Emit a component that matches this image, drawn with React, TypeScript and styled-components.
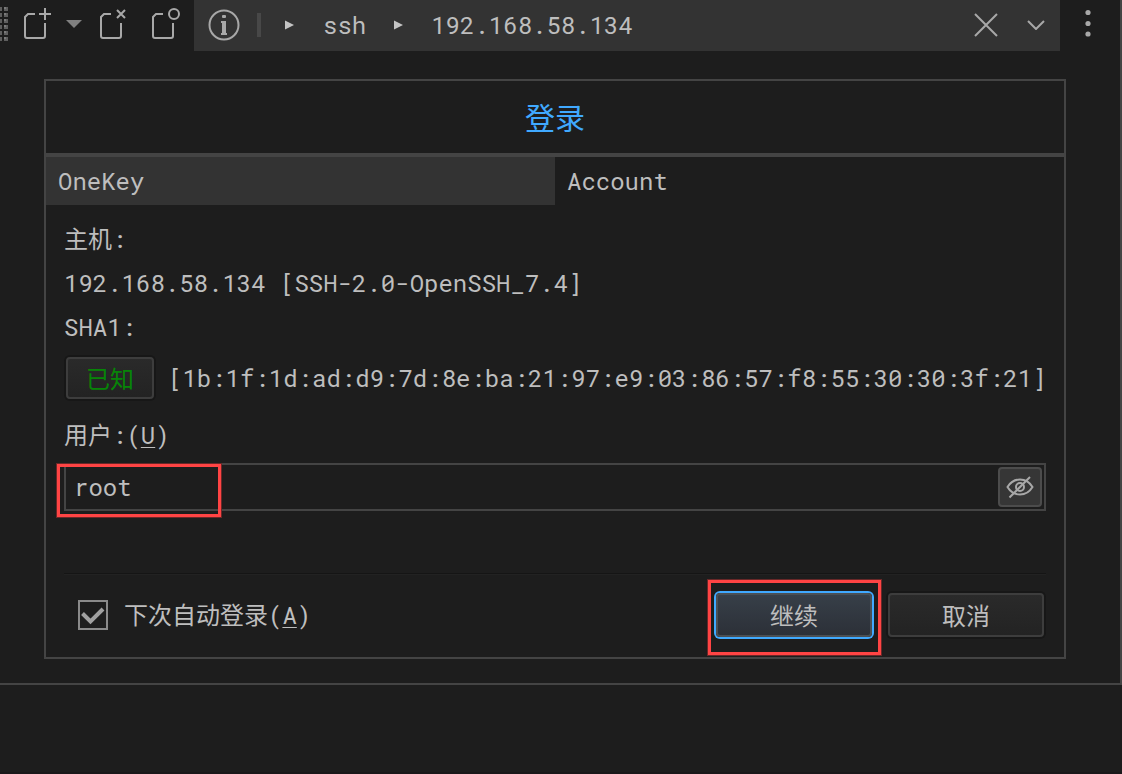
import React from "react";
import styled, { createGlobalStyle, css } from "styled-components";

const Global = createGlobalStyle`
  * { box-sizing: border-box; }
  body {
    margin: 0;
    background: #1d1d1d;
    color: #bebebe;
  }
  body, button, input {
    font-family: "Roboto Mono", "Liberation Mono", "Noto Sans CJK SC", monospace;
    font-size: 24px;
    font-weight: 400;
  }
`;

const Page = styled.div`
  min-height: 100vh;
  background: #1d1d1d;
  border-bottom: 2px solid #1a181a;
`;

const Window = styled.main`
  border: solid #444;
  border-width: 0 2px 2px 0;
`;

const Toolbar = styled.header`
  display: flex;
  align-items: stretch;
  height: 51px;
`;

const Tools = styled.div`
  flex: 0 0 194px;
  display: flex;
`;

const ToolGroup = styled.div`
  display: flex;
  gap: 20px;
  margin-left: 2px;
`;

const plain = css`
  border: 0;
  padding: 0;
  background: none;
  color: #a8a8a8;
  display: flex;
  align-items: center;
  justify-content: center;
`;

const ToolButton = styled.button<{ $width: number }>`
  ${plain}
  flex: 0 0 ${(p) => p.$width}px;
  svg { display: block; }
`;

const Grip = styled.svg`
  display: block;
  flex: none;
`;

const AddressBar = styled.nav`
  flex: 1;
  min-width: 0;
  display: flex;
  align-items: center;
  padding-bottom: 1px;
  background: #333;
`;

const Divider = styled.span`
  width: 4px;
  height: 24px;
  margin-left: 3px;
  background: #484848;
`;

const Crumb = styled.a`
  color: inherit;
  text-decoration: none;
  white-space: nowrap;
  line-height: 48px;
`;

const CrumbArrow = styled.svg<{ $before: number; $after: number }>`
  flex: none;
  margin: 0 ${(p) => p.$after}px 0 ${(p) => p.$before}px;
`;

const Spacer = styled.span`
  flex: 1;
`;

const MenuButton = styled.button`
  ${plain}
  flex: 0 0 60px;
  padding-right: 4px;
`;

const Dialog = styled.form`
  margin: 28px 54px 24px 44px;
  border: 2px solid #444;
`;

const Title = styled.h1`
  margin: 0;
  height: 72px;
  font-size: 30px;
  font-weight: 400;
  line-height: 74px;
  text-align: center;
  color: #40a9ff;
`;

const Tabs = styled.div`
  display: grid;
  grid-template-columns: 1fr 1fr;
  border-top: 4px solid #444;
`;

const Tab = styled.button<{ $raised?: boolean }>`
  border: 0;
  height: 48px;
  padding: 0 12px;
  text-align: left;
  color: inherit;
  background: ${(p) => (p.$raised ? "#333" : "transparent")};
`;

const Body = styled.div`
  padding: 12px 18px 18px;
`;

const Line = styled.div`
  line-height: 44px;
`;

const HashRow = styled.div`
  display: flex;
  align-items: center;
  gap: 14px;
  height: 58px;
  white-space: nowrap;
`;

const FieldLabel = styled.label`
  display: block;
  line-height: 56px;
`;

const Key = styled.span`
  text-decoration: underline;
  text-decoration-thickness: 1px;
  text-underline-offset: 3px;
`;

const PushButton = styled.button<{ $width: number; $primary?: boolean; $tone?: string }>`
  flex: none;
  width: ${(p) => p.$width}px;
  height: 44px;
  padding: 0 0 2px;
  border: 2px solid #3d3d3d;
  border-radius: 4px;
  box-shadow: 0 0 0 2px #171717;
  background: linear-gradient(#2a2a2a, #232323);
  color: ${(p) => p.$tone ?? "inherit"};
  ${(p) =>
    p.$primary &&
    css`
      border-color: #4a4f54;
      box-shadow: 0 0 0 2px #40a9ff;
      background: linear-gradient(#373f48, #2c3038);
    `}
`;

const KnownButton = styled(PushButton)`
  height: 42px;
  margin-left: 2px;
`;

const Field = styled.div`
  position: relative;
  display: flex;
  align-items: center;
  height: 48px;
  padding-right: 2px;
  border: 2px solid #444;
`;

const TextInput = styled.input`
  flex: 1;
  min-width: 0;
  height: 44px;
  padding: 0 8px;
  border: 0;
  outline: 0;
  background: transparent;
  color: inherit;
`;

const EyeButton = styled.button`
  ${plain}
  width: 44px;
  height: 40px;
  border: 2px solid #4c4c4c;
  border-radius: 4px;
  background: #363636;
`;

const Rule = styled.hr`
  margin: 62px 0 0;
  border: 0;
  border-top: 1px solid #151515;
  border-bottom: 1px solid #222;
`;

const Footer = styled.div`
  display: flex;
  align-items: center;
  justify-content: space-between;
  padding: 16px 2px 0 0;
`;

const CheckLabel = styled.label`
  display: flex;
  align-items: center;
  gap: 16px;
  padding-left: 14px;
  line-height: 44px;
`;

const CheckBox = styled.span`
  display: grid;
  width: 30px;
  height: 30px;
  > * { grid-area: 1 / 1; }
  svg { pointer-events: none; visibility: hidden; }
  input:checked + svg { visibility: visible; }
`;

const CheckInput = styled.input`
  appearance: none;
  width: 30px;
  height: 30px;
  margin: 0;
  border: 2px solid #8a8a8a;
`;

const Actions = styled.div`
  display: flex;
  align-items: center;
  gap: 16px;
  height: 48px;
`;

const Marked = styled.div`
  position: relative;
  display: flex;
`;

const Highlight = styled.span<{ $inset: string; $width?: number }>`
  position: absolute;
  inset: ${(p) => p.$inset};
  ${(p) => p.$width && `width: ${p.$width}px;`}
  border: 3px solid #ff4444;
  box-shadow: 0 0 0 1px #6a2828;
  pointer-events: none;
`;

const Sheet = ({ children }: { children: React.ReactNode }) => (
  <svg width="32" height="51" viewBox="0 0 32 51" fill="none" stroke="currentColor" strokeWidth="2">
    <path d="M14 14H7L4 17V36Q4 38 6 38H22Q24 38 24 36V23" />
    {children}
  </svg>
);

const Arrow = ({ before, after }: { before: number; after: number }) => (
  <CrumbArrow $before={before} $after={after} width="9" height="10" viewBox="0 0 9 10" aria-hidden="true">
    <path d="M0 0.5V9.5L9 5Z" fill="#c4c4c4" />
  </CrumbArrow>
);

const gripRows = [7, 13, 19, 25, 31, 37];

export default function App() {
  return (
    <>
      <Global />
      <Page>
        <Window>
          <Toolbar>
            <Tools>
              <Grip width="21" height="51" aria-hidden="true">
                {gripRows.map((y) => (
                  <g key={y} fill="#5e5e5e">
                    <rect x="0" y={y} width="2" height="4" />
                    <rect x="4" y={y} width="4" height="4" />
                    <rect x="4" y={y} width="2" height="2" fill="#7a7a7a" />
                  </g>
                ))}
              </Grip>
              <ToolButton type="button" $width={32} aria-label="New session">
                <Sheet><path d="M24 8V20M18 14H30" /></Sheet>
              </ToolButton>
              <ToolButton type="button" $width={42} aria-label="Session list">
                <svg width="16" height="51" viewBox="0 0 16 51"><path d="M0 20H16L8 28Z" fill="#808080" /></svg>
              </ToolButton>
              <ToolGroup>
                <ToolButton type="button" $width={32} aria-label="Close session">
                  <Sheet><path d="M20 10L28 18M28 10L20 18" /></Sheet>
                </ToolButton>
                <ToolButton type="button" $width={32} aria-label="Session state">
                  <Sheet><circle cx="25" cy="14" r="5" /></Sheet>
                </ToolButton>
              </ToolGroup>
            </Tools>
            <AddressBar aria-label="Address">
              <ToolButton type="button" $width={60} aria-label="Information">
                <svg width="32" height="32" viewBox="0 0 32 32" fill="none" stroke="currentColor" strokeWidth="2">
                  <circle cx="16" cy="16" r="14.500" />
                  <path d="M14 12H18V24H19V26H13V24H14V14H13V12Z" fill="currentColor" stroke="none" />
                  <rect x="14" y="6" width="4" height="3" rx="1" fill="currentColor" stroke="none" />
                </svg>
              </ToolButton>
              <Divider />
              <Arrow before={24} after={29} />
              <Crumb href="#ssh">ssh</Crumb>
              <Arrow before={28} after={28} />
              <Crumb href="#host">192.168.58.134</Crumb>
              <Spacer />
              <ToolButton type="button" $width={50} aria-label="Clear">
                <svg width="24" height="24" viewBox="0 0 24 24" fill="none" stroke="currentColor" strokeWidth="2">
                  <path d="M1 1L23 23M23 1L1 23" />
                </svg>
              </ToolButton>
              <ToolButton type="button" $width={49} aria-label="History">
                <svg width="18" height="10" viewBox="0 0 18 10" fill="none" stroke="currentColor" strokeWidth="2">
                  <path d="M1 1L9 9L17 1" />
                </svg>
              </ToolButton>
            </AddressBar>
            <MenuButton type="button" aria-label="Menu">
              <svg width="6" height="51" viewBox="0 0 6 51" fill="currentColor">
                <circle cx="3" cy="12.500" r="2.600" />
                <circle cx="3" cy="23.500" r="2.600" />
                <circle cx="3" cy="34" r="2.600" />
              </svg>
            </MenuButton>
          </Toolbar>

          <Dialog onSubmit={(e) => e.preventDefault()}>
            <Title>登录</Title>
            <Tabs role="tablist">
              <Tab type="button" role="tab" $raised aria-selected={false}>OneKey</Tab>
              <Tab type="button" role="tab" aria-selected>Account</Tab>
            </Tabs>
            <Body>
              <Line>主机:</Line>
              <Line>192.168.58.134 [SSH-2.0-OpenSSH_7.4]</Line>
              <Line>SHA1:</Line>
              <HashRow>
                <KnownButton type="button" $width={88} $tone="#078507">已知</KnownButton>
                <span>[1b:1f:1d:ad:d9:7d:8e:ba:21:97:e9:03:86:57:f8:55:30:30:3f:21]</span>
              </HashRow>
              <FieldLabel htmlFor="user">用户:(<Key>U</Key>)</FieldLabel>
              <Field>
                <TextInput id="user" type="text" defaultValue="root" accessKey="u" />
                <EyeButton type="button" aria-label="Hide user name">
                  <svg width="28" height="24" viewBox="0 0 28 24" fill="none" stroke="currentColor" strokeWidth="2">
                    <path d="M1.500 12Q6 4.500 14 4.500T26.500 12Q22 19.500 14 19.500T1.500 12Z" />
                    <circle cx="14" cy="12" r="4" />
                    <path d="M3.500 22.500L24 2" />
                  </svg>
                </EyeButton>
                <Highlight $inset="-1px auto -8px -9px" $width={164} />
              </Field>
              <Rule />
              <Footer>
                <CheckLabel>
                  <CheckBox>
                    <CheckInput type="checkbox" defaultChecked accessKey="a" />
                    <svg width="30" height="30" viewBox="0 0 30 30" fill="none" stroke="#a0a0a0" strokeWidth="4">
                      <path d="M4.500 13.500L12.500 21.500L25 9" />
                    </svg>
                  </CheckBox>
                  <span>下次自动登录(<Key>A</Key>)</span>
                </CheckLabel>
                <Actions>
                  <Marked>
                    <PushButton type="submit" $width={156} $primary>继续</PushButton>
                    <Highlight $inset="-13px -9px -18px -8px" />
                  </Marked>
                  <PushButton type="button" $width={156}>取消</PushButton>
                </Actions>
              </Footer>
            </Body>
          </Dialog>
        </Window>
      </Page>
    </>
  );
}
